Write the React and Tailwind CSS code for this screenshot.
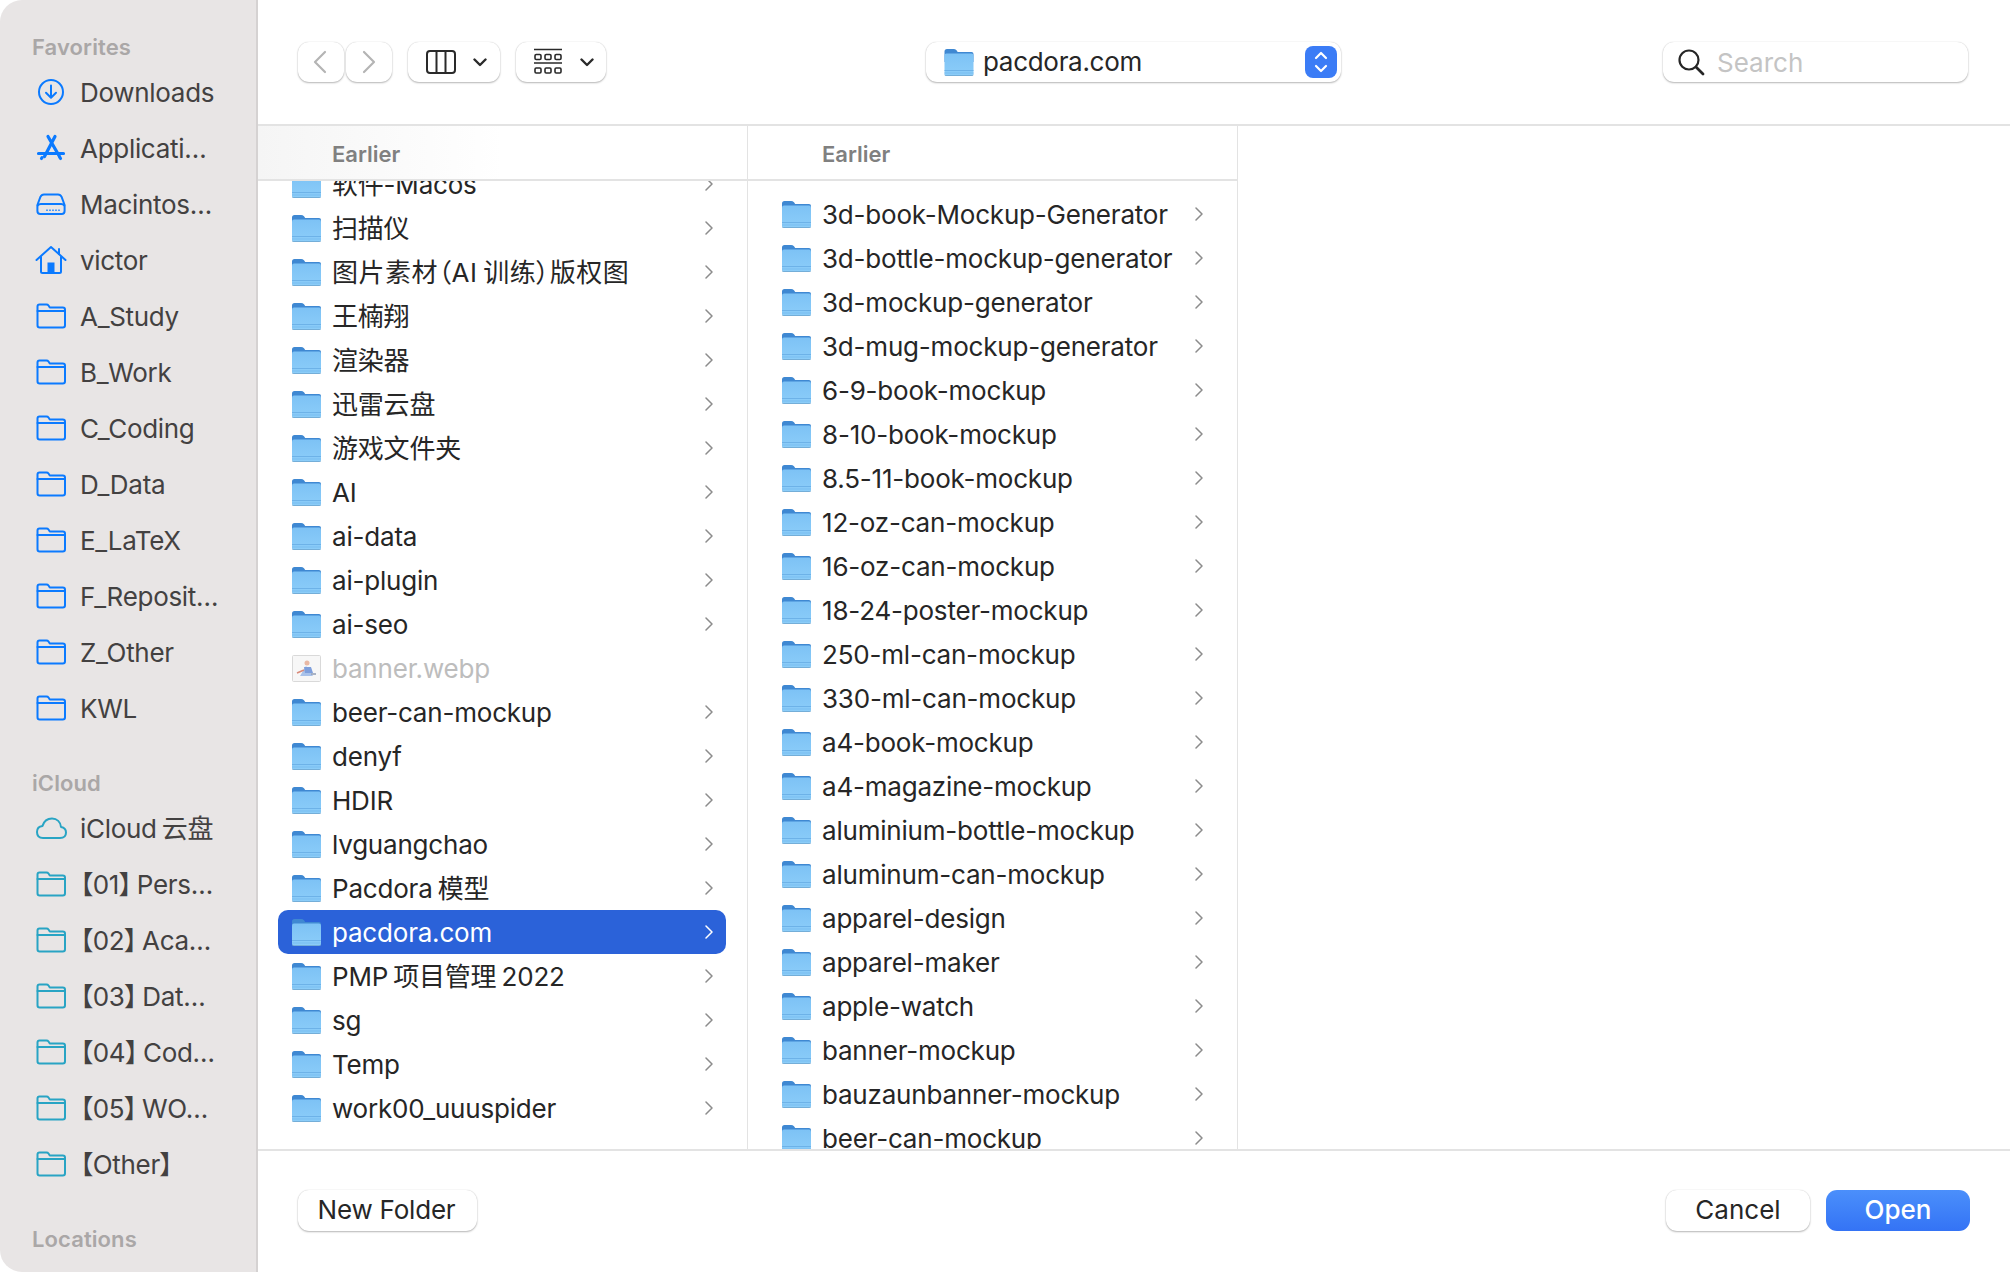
const favorites = [
  { name: "Downloads", icon: "download" },
  { name: "Applicati…", icon: "apps" },
  { name: "Macintos…", icon: "drive" },
  { name: "victor", icon: "home" },
  { name: "A_Study", icon: "folder" },
  { name: "B_Work", icon: "folder" },
  { name: "C_Coding", icon: "folder" },
  { name: "D_Data", icon: "folder" },
  { name: "E_LaTeX", icon: "folder" },
  { name: "F_Reposit…", icon: "folder" },
  { name: "Z_Other", icon: "folder" },
  { name: "KWL", icon: "folder" },
];

const icloud = [
  { name: "iCloud 云盘", icon: "cloud" },
  { name: "【01】 Pers…", icon: "folder" },
  { name: "【02】 Aca…", icon: "folder" },
  { name: "【03】 Dat…", icon: "folder" },
  { name: "【04】 Cod…", icon: "folder" },
  { name: "【05】 WO…", icon: "folder" },
  { name: "【Other】", icon: "folder" },
];

const firstColumn = [
  "软件-Macos",
  "扫描仪",
  "图片素材（AI 训练）版权图",
  "王楠翔",
  "渲染器",
  "迅雷云盘",
  "游戏文件夹",
  "AI",
  "ai-data",
  "ai-plugin",
  "ai-seo",
  "banner.webp",
  "beer-can-mockup",
  "denyf",
  "HDIR",
  "lvguangchao",
  "Pacdora 模型",
  "pacdora.com",
  "PMP 项目管理 2022",
  "sg",
  "Temp",
  "work00_uuuspider",
];

const secondColumn = [
  "3d-book-Mockup-Generator",
  "3d-bottle-mockup-generator",
  "3d-mockup-generator",
  "3d-mug-mockup-generator",
  "6-9-book-mockup",
  "8-10-book-mockup",
  "8.5-11-book-mockup",
  "12-oz-can-mockup",
  "16-oz-can-mockup",
  "18-24-poster-mockup",
  "250-ml-can-mockup",
  "330-ml-can-mockup",
  "a4-book-mockup",
  "a4-magazine-mockup",
  "aluminium-bottle-mockup",
  "aluminum-can-mockup",
  "apparel-design",
  "apparel-maker",
  "apple-watch",
  "banner-mockup",
  "bauzaunbanner-mockup",
  "beer-can-mockup",
];

function SidebarIcon({ type, className }) {
  const common = {
    width: 32,
    height: 32,
    viewBox: "0 0 32 32",
    fill: "none",
    stroke: "currentColor",
    strokeWidth: 2,
    strokeLinecap: "round",
    strokeLinejoin: "round",
    className,
  };
  if (type === "download") {
    return (
      <svg {...common}>
        <circle cx="16" cy="16" r="12" />
        <path d="M16 9.5v12M11 16.8l5 5 5-5" />
      </svg>
    );
  }
  if (type === "apps") {
    return (
      <svg {...common} strokeWidth="3.2">
        <path d="M20 4.500 9.500 24.500M13 4.500l11.500 20M3.500 21.500h25" />
        <path d="M6.500 26.500l.5-.8M25.500 26.500l-.5-.8" />
      </svg>
    );
  }
  if (type === "drive") {
    return (
      <svg {...common}>
        <path d="M9 6.5h14q2.5 0 3.6 2.4l3 8.1v6q0 3-3 3H5.4q-3 0-3-3v-6l3-8.1Q6.500 6.500 9 6.500Z" />
        <path d="M2.800 17.500q1-1.500 3-1.500h20.400q2 0 3 1.500" />
        <path d="M12 21.500v1.500M15 21.500v1.500M18 21.500v1.500M21 21.500v1.500M24 21.500v1.500" strokeWidth="1.400" strokeLinecap="butt" />
      </svg>
    );
  }
  if (type === "home") {
    return (
      <svg {...common}>
        <path d="M1.500 16 16 3l14.500 13" />
        <path d="M6 13v14.500q0 1.500 1.500 1.500h17q1.500 0 1.500-1.500V13" />
        <path d="M24 5v5" />
        <rect x="12.500" y="18.500" width="7" height="10" fill="currentColor" stroke="none" />
      </svg>
    );
  }
  if (type === "cloud") {
    return (
      <svg {...common}>
        <path d="M8 26q-6 0-6-6 0-5.500 5.500-6.100C9 9 13 6.500 17 6.500c5 0 8.500 3.500 9 8.500q5 1 5 5.500 0 5.500-6 5.500Z" />
      </svg>
    );
  }
  return (
    <svg {...common}>
      <path d="M2.500 9V6.500q0-2 2-2h7q1.300 0 2 1l1.300 2h13q2.200 0 2.200 2.200v15.600q0 2.200-2.200 2.200H4.700q-2.200 0-2.200-2.200Z" />
      <path d="M2.500 11h27" />
    </svg>
  );
}

function SidebarSection({ title, items, color }) {
  return (
    <div>
      <div className="pl-[32px] h-[32px] leading-[32px] text-[22px] font-semibold text-[#aaa7a7] tracking-[0.1px] mb-[1px]">
        {title}
      </div>
      {items.map((item) => (
        <div key={item.name} className="flex items-center h-[56px] pl-[35px]">
          <SidebarIcon type={item.icon} className={color} />
          <span className="ml-[13px] text-[26px] text-[#434141] whitespace-nowrap tracking-[-0.3px] [word-spacing:-2px] [font-feature-settings:'palt']">
            {item.name}
          </span>
        </div>
      ))}
    </div>
  );
}

function FolderIcon({ small }) {
  return (
    <svg width="29" height="29" viewBox="0 0 29 29" className={small ? "shrink-0 w-[30px] h-[29px]" : "shrink-0"}>
      <defs>
        <linearGradient id="folderBody" x1="0" y1="0" x2="0" y2="1">
          <stop offset="0" stopColor="#7dc2f5" />
          <stop offset="1" stopColor="#8ccdf9" />
        </linearGradient>
      </defs>
      <path d="M0 3.500Q0 1 2.500 1H9q1.800 0 3 1.300L13.200 4H27q2 0 2 2v8H0Z" fill="#3f88d2" />
      <path d="M0 7.500Q0 5.500 2 5.500H27q2 0 2 2V26q0 2-2 2H2q-2 0-2-2Z" fill="url(#folderBody)" />
      <path d="M0 22.500h29" stroke="#6db2e8" strokeWidth="1" />
      <path d="M0 25h29" stroke="#79bdf0" strokeWidth="1" />
      <path d="M0 26.500V26q0 1.500 2 1.500h25q2 0 2-1.500v.5q0 1.500-2 1.500H2q-2 0-2-1.500Z" fill="#5c8fb8" />
    </svg>
  );
}

function ImageThumb() {
  return (
    <svg width="29" height="27" viewBox="0 0 29 27" className="shrink-0">
      <rect x="0.500" y="0.500" width="28" height="26" rx="1" fill="#f7f7f7" stroke="#d9d9d9" />
      <path d="M8 21l6-10 3 4 4 6Z" fill="#a9c2ea" />
      <circle cx="15" cy="8" r="2.500" fill="#e9b9a5" />
      <path d="M12 12h7l2 6h-8Z" fill="#7f9fdc" />
      <path d="M5 18l7-3" stroke="#d98a7a" strokeWidth="1.500" />
      <path d="M19 19h5" stroke="#8f9db5" strokeWidth="1.500" />
    </svg>
  );
}

function Chevron({ className }) {
  return (
    <svg width="8" height="14" viewBox="0 0 8 14" fill="none" stroke="currentColor" strokeWidth="1.500" strokeLinecap="round" strokeLinejoin="round" className={className}>
      <path d="M1 1l6 6-6 6" />
    </svg>
  );
}

function FileRow({ name, selected, disabled }) {
  // the row with full-width brackets runs a little wider in the reference
  const tracking = name.includes("（") ? "tracking-[0.5px]" : "tracking-[-0.2px]";
  return (
    <div className={`flex items-center h-[44px] ml-[20px] mr-[21px] pl-[14px] pr-[13px] rounded-[10px] ${selected ? "bg-[#2b62d9]" : ""}`}>
      {disabled ? <ImageThumb /> : <FolderIcon />}
      <span className={`ml-[11px] flex-1 text-[26px] whitespace-nowrap ${tracking} [word-spacing:-2px] [font-feature-settings:'palt'] ${selected ? "text-white" : disabled ? "text-[#bdbdbd]" : "text-[#262626]"}`}>
        {name}
      </span>
      {!disabled && <Chevron className={selected ? "text-white" : "text-[#8c8c8c]"} />}
    </div>
  );
}

function BrowserColumn({ items, listClass, headerClass, selected, disabled }) {
  return (
    <div className="w-[490px] h-full flex flex-col border-r border-[#e3e3e3] overflow-hidden">
      <div className={`h-[55px] shrink-0 flex items-center pl-[74px] pt-[3px] border-b-2 border-[#e3e3e3] relative z-10 ${headerClass}`}>
        <span className="text-[22px] font-semibold text-[#808080]">Earlier</span>
      </div>
      <div className={listClass}>
        {items.map((name) => (
          <FileRow key={name} name={name} selected={name === selected} disabled={name === disabled} />
        ))}
      </div>
    </div>
  );
}

function ToolButton({ className, children }) {
  return (
    <div className={`h-[40px] flex items-center justify-center bg-white rounded-[11px] shadow-[0_1px_2px_rgba(0,0,0,0.28),0_0_1px_rgba(0,0,0,0.2)] ${className}`}>
      {children}
    </div>
  );
}

function SmallDown() {
  return (
    <svg width="14" height="9" viewBox="0 0 14 9" fill="none" stroke="#2a2a2a" strokeWidth="2.400" strokeLinecap="round" strokeLinejoin="round">
      <path d="M1.500 1.500 7 7l5.500-5.500" />
    </svg>
  );
}

function Toolbar() {
  return (
    <div className="h-[126px] shrink-0 flex items-center pl-[40px] pr-[42px] border-b-2 border-[#e3e3e3]">
      <div className="flex gap-[2px]">
        <ToolButton className="w-[46px] pr-[2px]">
          <svg width="14" height="24" viewBox="0 0 14 24" fill="none" stroke="#b4b4b4" strokeWidth="2.200" strokeLinecap="round" strokeLinejoin="round">
            <path d="M12 2 2 12l10 10" />
          </svg>
        </ToolButton>
        <ToolButton className="w-[46px]">
          <svg width="14" height="24" viewBox="0 0 14 24" fill="none" stroke="#b4b4b4" strokeWidth="2.200" strokeLinecap="round" strokeLinejoin="round">
            <path d="m2 2 10 10L2 22" />
          </svg>
        </ToolButton>
      </div>
      <ToolButton className="w-[92px] ml-[16px] gap-[17px] pl-[5px]">
        <svg width="30" height="24" viewBox="0 0 30 24" fill="none" stroke="#2a2a2a" strokeWidth="2">
          <rect x="1" y="1" width="28" height="22" rx="3" />
          <path d="M10.500 1v22M19.500 1v22" />
        </svg>
        <SmallDown />
      </ToolButton>
      <ToolButton className="w-[90px] ml-[16px] gap-[18px] pl-[5px]">
        <svg width="28" height="28" viewBox="0 0 28 28" fill="none" stroke="#2a2a2a" strokeWidth="1.600">
          <path d="M0 1.500h28M0 15h28" />
          <rect x="1" y="6.500" width="6" height="5" rx="1.200" />
          <rect x="11" y="6.500" width="6" height="5" rx="1.200" />
          <rect x="21" y="6.500" width="6" height="5" rx="1.200" />
          <rect x="1" y="20" width="6" height="5" rx="1.200" />
          <rect x="11" y="20" width="6" height="5" rx="1.200" />
          <rect x="21" y="20" width="6" height="5" rx="1.200" />
        </svg>
        <SmallDown />
      </ToolButton>

      <ToolButton className="w-[415px] ml-[320px] !justify-start pl-[18px] pr-[4px]">
        <FolderIcon small />
        <span className="ml-[9px] flex-1 text-[26px] tracking-[-0.3px] text-[#262626] pb-[2px]">pacdora.com</span>
        <div className="w-[32px] h-[32px] rounded-[8px] bg-[#3b7cf6] flex items-center justify-center">
          <svg width="16" height="24" viewBox="0 0 16 24" fill="none" stroke="white" strokeWidth="2.200" strokeLinecap="round" strokeLinejoin="round">
            <path d="m3 8 5-5 5 5M3 16l5 5 5-5" />
          </svg>
        </div>
      </ToolButton>

      <ToolButton className="w-[305px] ml-auto !justify-start pl-[13px]">
        <svg width="30" height="30" viewBox="0 0 30 30" fill="none" stroke="#262626" strokeWidth="2.200" strokeLinecap="round">
          <circle cx="13" cy="13" r="9.500" />
          <path d="m20 20 7 7" strokeWidth="2.800" />
        </svg>
        <span className="ml-[11px] text-[26px] text-[#c4c4c4]">Search</span>
      </ToolButton>
    </div>
  );
}

function Footer() {
  return (
    <div className="flex-1 flex items-start pl-[40px] pr-[40px] pt-[39px] border-t-2 border-[#e3e3e3]">
      <ToolButton className="w-[179px] !h-[41px] text-[26px] tracking-[-0.2px] text-[#262626] pb-[2px] pr-[2px]">New Folder</ToolButton>
      <ToolButton className="w-[144px] !h-[41px] ml-auto text-[26px] text-[#262626] pb-[2px]">Cancel</ToolButton>
      <div className="w-[144px] h-[41px] ml-[16px] pb-[2px] rounded-[11px] flex items-center justify-center text-[26px] font-medium text-white bg-gradient-to-b from-[#4b8ffb] to-[#3473f5]">
        Open
      </div>
    </div>
  );
}

export default function App() {
  return (
    <div className="w-[2010px] h-[1272px] flex bg-white overflow-hidden font-['Inter','Noto_Sans_CJK_SC',sans-serif]">
      {/* Sidebar */}
      <aside className="w-[258px] shrink-0 h-full bg-[#e8e5e5] rounded-l-[22px] border-r-2 border-[#d5d2d2] pt-[31px] overflow-hidden">
        <SidebarSection title="Favorites" items={favorites} color="text-[#0b7aff]" />
        <div className="mt-[31px]">
          <SidebarSection title="iCloud" items={icloud} color="text-[#28a4c4]" />
        </div>
        <div className="mt-[31px]">
          <SidebarSection title="Locations" items={[]} color="text-[#0b7aff]" />
        </div>
      </aside>

      <main className="flex-1 flex flex-col h-full min-w-0">
        <Toolbar />
        <div className="h-[1023px] shrink-0 flex overflow-hidden">
          <BrowserColumn
            items={firstColumn}
            listClass="-mt-[19px]"
            headerClass="bg-gradient-to-r from-[#f5f5f5] to-white to-[50%]"
            selected="pacdora.com"
            disabled="banner.webp"
          />
          <BrowserColumn items={secondColumn} listClass="pt-[11px]" headerClass="bg-white" />
        </div>
        <Footer />
      </main>
    </div>
  );
}
